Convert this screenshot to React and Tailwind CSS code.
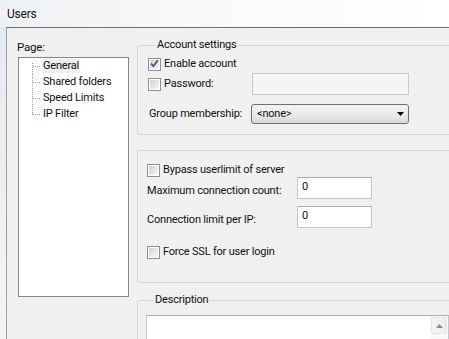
const font = { fontFamily: 'Roboto, "Liberation Sans", sans-serif' };

function CheckBox({ checked = false }) {
  return (
    <span className="w-[13px] h-[13px] shrink-0 border border-[#8e8f8f] bg-white p-[1px] flex">
      <span
        className={`flex-1 flex items-center justify-center bg-gradient-to-br ${
          checked ? 'from-[#c9d3e3] to-[#f4f6fa]' : 'from-[#d2d2d2] to-[#f7f7f7]'
        }`}
      >
        {checked && (
          <svg width="9" height="9" viewBox="0 0 9 9" className="-mt-[1px]">
            <path d="M1.2 4.6 L3.4 7.2 L7.9 1.2" fill="none" stroke="#3b4f8c" strokeWidth="1.7" />
          </svg>
        )}
      </span>
    </span>
  );
}

function TreeItem({ label, first, last, selected }) {
  return (
    <div className="h-[16px] flex items-center">
      <span className="w-[13px] shrink-0" />
      <svg width="10" height="16" className="shrink-0">
        <line x1="0.5" y1={first ? 5 : 0} x2="0.5" y2={last ? 9 : 16} stroke="#a0a0a0" strokeDasharray="1 1" />
        <line x1="1" y1="8.5" x2="9" y2="8.5" stroke="#a0a0a0" strokeDasharray="1 1" />
      </svg>
      <span className={`px-[1px] leading-[14px] ${selected ? 'bg-[#eeeeee]' : ''}`}>{label}</span>
    </div>
  );
}

function TextBox({ value = '', className = '' }) {
  return (
    <div
      className={`h-[22px] w-[75px] bg-white border border-[#c3c6cc] border-t-[#abadb3] pl-[4px] pb-[2px] flex items-center ${className}`}
    >
      {value}
    </div>
  );
}

export default function App() {
  return (
    <div
      className="w-[449px] h-[339px] overflow-hidden flex flex-col text-[11px] tracking-[-0.2px] font-normal text-[#111] whitespace-nowrap"
      style={font}
    >
      {/* title bar */}
      <div className="h-[27px] shrink-0 flex items-center pl-[7px] text-[12px] bg-gradient-to-r from-[#eef1f4] via-[#fafafa] to-white">
        Users
      </div>

      <div className="flex-1 flex min-h-0">
        <div className="w-[6px] shrink-0 bg-gradient-to-b from-[#e4eaf1] to-[#f3f4f5]" />
        <div className="flex-1 flex bg-[#f0f0f0] border-t border-t-[#6f6f6f] border-l border-l-[#a0a0a0]">
          {/* left: page tree */}
          <div className="pl-[10px] pt-[12px] shrink-0">
            <div className="leading-[14px] text-[11.5px]">Page:</div>
            <div className="mt-[3px] ml-[1px] w-[111px] h-[240px] bg-white border border-[#828790]">
              <TreeItem label="General" first selected />
              <TreeItem label="Shared folders" />
              <TreeItem label="Speed Limits" />
              <TreeItem label="IP Filter" last />
            </div>
          </div>

          {/* right: settings */}
          <div className="ml-[8px] pt-[10px] w-[330px] shrink-0">
            <fieldset className="border border-[#d5d5d5] rounded-[3px] pl-[10px] pb-[10px]">
              <legend className="ml-[8px] px-[1px] leading-[14px]">Account settings</legend>
              <div className="mt-[4px] h-[16px] flex items-center gap-[3px]">
                <CheckBox checked />
                <span>Enable account</span>
              </div>
              <div className="mt-[1px] h-[22px] flex items-center">
                <div className="w-[104px] flex items-center gap-[3px]">
                  <CheckBox />
                  <span>Password:</span>
                </div>
                <div className="w-[157px] h-[22px] bg-[#f5f5f5] border border-[#c9c9c9]" />
              </div>
              <div className="mt-[9px] h-[20px] flex items-center">
                <div className="w-[103px] pl-[1px]">Group membership:</div>
                <div className="w-[158px] h-[20px] rounded-[3px] border border-[#707070] bg-gradient-to-b from-[#f3f3f3] via-[#ebebeb] to-[#d9d9d9] flex items-center pl-[5px] pr-[4px]">
                  <span className="flex-1">&lt;none&gt;</span>
                  <svg width="7" height="4" viewBox="0 0 7 4">
                    <path d="M0 0 H7 L3.5 4 Z" fill="#000" />
                  </svg>
                </div>
              </div>
            </fieldset>

            <div className="mt-[15px] border border-[#d5d5d5] rounded-[3px] pl-[9px] pt-[13px] pb-[23px]">
              <div className="h-[13px] flex items-center gap-[3px]">
                <CheckBox />
                <span>Bypass userlimit of server</span>
              </div>
              <div className="flex items-start">
                <div className="w-[150px] pt-[7px] leading-[14px]">Maximum connection count:</div>
                <TextBox value="0" />
              </div>
              <div className="mt-[7px] flex items-start">
                <div className="w-[150px] pt-[7px] leading-[14px]">Connection limit per IP:</div>
                <TextBox value="0" />
              </div>
              <div className="mt-[17px] h-[14px] flex items-center gap-[3px]">
                <CheckBox />
                <span>Force SSL for user login</span>
              </div>
            </div>

            <fieldset className="mt-[10px] border border-[#d5d5d5] rounded-[3px] pl-[8px] pb-[10px]">
              <legend className="ml-[8px] px-[1px] leading-[14px]">Description</legend>
              <div className="mt-[8px] w-[303px] h-[60px] bg-white border border-[#c3c6cc] border-t-[#abadb3] flex justify-end">
                <div className="w-[18px] bg-[#fafafa] pt-[1px] px-[1px]">
                  <div className="h-[17px] rounded-[2px] border border-[#e4e4e4] bg-gradient-to-r from-[#f6f6f6] to-[#ececec] flex items-center justify-center">
                    <svg width="7" height="4" viewBox="0 0 7 4">
                      <path d="M0 4 H7 L3.5 0 Z" fill="#8a8a8a" />
                    </svg>
                  </div>
                </div>
              </div>
            </fieldset>
          </div>
        </div>
      </div>
    </div>
  );
}
